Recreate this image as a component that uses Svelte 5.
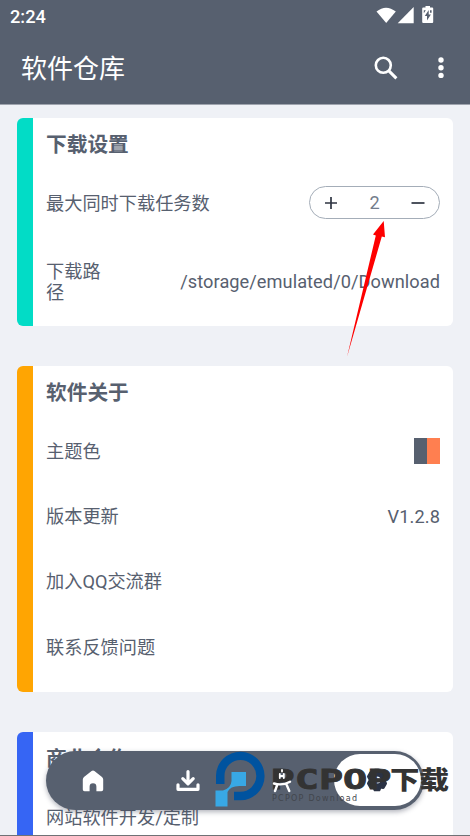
<script lang="ts">
  let maxTasks = $state(2);

  const downloadPath = '/storage/emulated/0/Download';
  const aboutRows = [
    { label: '主题色', kind: 'swatch', value: '' },
    { label: '版本更新', kind: 'text', value: 'V1.2.8' },
    { label: '加入QQ交流群', kind: 'text', value: '' },
    { label: '联系反馈问题', kind: 'text', value: '' }
  ];
</script>

<div class="screen">
  <header>
    <div class="status">
      <span>2:24</span>
      <svg width="60" height="20" viewBox="0 0 60 20" fill="#fff" aria-hidden="true">
        <path d="M1.5 5.6Q11 -2.2 20.8 5.6L11.2 17Z" />
        <path d="M38.7 1V17.3H22.7Z" />
        <path
          fill-rule="evenodd"
          d="M50.5 0h4.5v1.5h2.2q1 0 1 1v13.6q0 1-1 1h-9q-1 0-1-1V2.5q0-1 1-1h2.3zM53.7 4l-3.9 6h2.2v4.5l3.9-6h-2.2zM48.8 4.2v3l2-3zM56.6 4.2h-1.6v2.6h1.6z"
        />
      </svg>
    </div>
    <div class="toolbar">
      <h1>软件仓库</h1>
      <button type="button" aria-label="搜索">
        <svg width="24" height="24" viewBox="0 0 24 24" fill="none" stroke="#fff">
          <circle cx="9.3" cy="9.3" r="7.5" stroke-width="2.6" />
          <path d="M14.6 14.6l7.8 7.8" stroke-width="3" />
        </svg>
      </button>
      <button type="button" aria-label="更多">
        <svg width="6" height="22" viewBox="0 0 6 22" fill="#fff">
          <circle cx="3" cy="3" r="2.7" />
          <circle cx="3" cy="10.7" r="2.7" />
          <circle cx="3" cy="18.4" r="2.7" />
        </svg>
      </button>
    </div>
  </header>

  <main>
    <section class="card teal">
      <h2>下载设置</h2>
      <div class="row">
        <span class="label">最大同时下载任务数</span>
        <div class="stepper">
          <button type="button" aria-label="增加" onclick={() => maxTasks++}>
            <svg width="12" height="12" viewBox="0 0 12 12"><path d="M0 6h12M6 0v12" /></svg>
          </button>
          <span>{maxTasks}</span>
          <button type="button" aria-label="减少" onclick={() => maxTasks--}>
            <svg width="14" height="12" viewBox="0 0 14 12"><path d="M0.5 6h13" /></svg>
          </button>
        </div>
      </div>
      <div class="row path-row">
        <span class="narrow">下载路径</span>
        <span class="path">{downloadPath}</span>
      </div>
    </section>

    <section class="card orange">
      <h2>软件关于</h2>
      {#each aboutRows as row}
        <div class="row">
          <span class="label">{row.label}</span>
          {#if row.kind === 'swatch'}
            <span class="swatch"></span>
          {:else if row.value}
            <span class="version">{row.value}</span>
          {/if}
        </div>
      {/each}
    </section>

    <section class="card blue">
      <h2>商业合作</h2>
      <div class="row">
        <span class="label">网站软件开发/定制</span>
      </div>
    </section>
  </main>

  <nav>
    <button type="button" aria-label="首页">
      <svg width="22" height="22" viewBox="0 0 22 22" fill="#fff">
        <path d="M9.6 1q1.4-1.1 2.8 0l7.6 5.9q1.2 1 1.2 2.5v10.1q0 1.8-1.8 1.8h-5v-4.6a3.4 3.4 0 0 0-6.8 0v4.600h-5Q.8 21.300.8 19.500V9.400Q.8 7.900 2 6.900z" />
      </svg>
    </button>
    <button type="button" aria-label="下载">
      <svg width="24" height="22" viewBox="0 0 24 22" fill="none" stroke="#fff" stroke-width="3.2" stroke-linecap="round" stroke-linejoin="round">
        <path d="M12 1.6v12M6.800 8.600l5.200 5.200 5.200-5.200M2 14.800v4.500h20v-4.500" />
      </svg>
    </button>
    <button type="button" class="raised" aria-label="应用">
      <svg width="22" height="24" viewBox="0 0 22 24" fill="none" stroke="#fff" stroke-linecap="round">
        <path stroke-width="1.8" d="M11 .9v1.600M8.800 5v4M12.800 5v4M8.800 7h4" />
        <path stroke-width="2.4" d="M3 14.500q8.500 2.500 16-1.800M6 16.500L4 22M15.500 15.500l2.800 6.500" />
      </svg>
    </button>
    <button type="button" class="active" aria-label="设置">
      <svg width="24" height="24" viewBox="0 0 24 24">
        <path
          fill="#2b3345"
          stroke="#2b3345"
          stroke-width="3"
          stroke-linejoin="round"
          d="M10 2.200h4l1.200 2.800 3-.4 2.300 3.900L18.700 12l1.800 3.500-2.300 3.900-3-.4-1.200 2.800h-4l-1.200-2.800-3 .4-2.300-3.900L5.300 12 3.500 8.500l2.300-3.900 3 .4z"
        />
        <circle cx="12" cy="12" r="3.6" fill="#fff" />
      </svg>
    </button>
  </nav>

  <svg class="arrow" width="44" height="142" viewBox="0 0 44 142" aria-hidden="true">
    <path fill="#fe0000" d="M37.700 3L39 19.300 35.800 18.500 1 139 29.800 17.500 27 16.500z" />
  </svg>

  <svg class="watermark" width="240" height="62" viewBox="0 0 240 62" aria-hidden="true">
    <path fill="#00539f" d="M1 34V25.500a24.300 24.300 0 1 1 24.300 24.800H19V41.800h6.300a15.900 15.900 0 1 0-15.800-16.100V34z" />
    <path fill="#38a8e5" d="M16.500 22H31V36H24.500Q15 36 12.500 42V56.500H.5V40.500H8Q16 38 16.500 31z" />
    <text class="brand" x="55.500" y="39" textLength="121" lengthAdjust="spacingAndGlyphs">PCPOP</text>
    <text class="brand-cjk" x="175" y="39.300" textLength="59" lengthAdjust="spacingAndGlyphs">下载</text>
    <text class="tagline" x="57" y="50.500" textLength="85">PCPOP Download</text>
  </svg>
</div>

<style>
  :global(body) {
    margin: 0;
  }

  .screen {
    position: relative;
    box-sizing: border-box;
    height: 836px;
    overflow: hidden;
    border-bottom: 1px solid #6f7175;
    background: #eff1f6;
    color: #57606f;
    font-family: Roboto, 'Noto Sans CJK SC', sans-serif;
    font-size: 18.2px;
  }

  button {
    display: grid;
    place-items: center;
    padding: 0;
    border: 0;
    background: none;
    cursor: pointer;
  }

  svg {
    display: block;
  }

  header {
    box-sizing: border-box;
    height: 105px;
    border-bottom: 1px solid #9fa4ae;
    background: #57606f;
    color: #fff;
  }

  .status {
    display: flex;
    align-items: center;
    justify-content: space-between;
    height: 32px;
    padding: 0 35px 0 10px;
    font-size: 18.2px;
    font-weight: 500;
  }

  .status svg {
    margin-top: -1px;
  }

  .toolbar {
    display: flex;
    align-items: center;
    height: 72px;
    padding: 0 20px 0 21px;
  }

  h1 {
    flex: 1;
    margin: 0;
    padding-top: 2px;
    font-size: 26px;
    font-weight: 400;
    line-height: 36px;
  }

  .toolbar button {
    width: 28px;
    height: 40px;
  }

  .toolbar button + button {
    width: 26px;
    margin-right: -4px;
    margin-left: 28px;
  }

  main {
    display: flex;
    flex-direction: column;
    gap: 40px;
    padding: 13px 17px 0;
  }

  .card {
    box-sizing: border-box;
    padding: 0 13px 12px;
    border-left: 16px solid;
    border-radius: 6px;
    background: #fff;
  }

  .teal {
    height: 208px;
    border-color: #02dcc6;
  }

  .orange {
    height: 326px;
    border-color: #ffa502;
  }

  .blue {
    height: 208px;
    border-color: #3665f4;
  }

  h2 {
    height: 52px;
    margin: 0;
    font-size: 20.7px;
    font-weight: 700;
    line-height: 54px;
  }

  .row {
    display: flex;
    align-items: center;
    justify-content: space-between;
    height: 65.3px;
  }

  .label {
    padding-bottom: 2px;
  }

  .path-row {
    height: 92px;
  }

  .narrow {
    width: 58px;
    padding-top: 1px;
    line-height: 21px;
  }

  .path {
    letter-spacing: 0.06px;
  }

  .version {
    padding-top: 1px;
    letter-spacing: 0.1px;
  }

  .stepper {
    display: flex;
    align-items: center;
    justify-content: space-between;
    box-sizing: border-box;
    width: 131px;
    height: 33px;
    border: 1px solid #a4adb8;
    border-radius: 17px;
    color: #747d8c;
  }

  .stepper button {
    width: 42px;
    height: 30px;
  }

  .stepper path {
    stroke: #2f3542;
    stroke-width: 1.7;
  }

  .swatch {
    width: 26px;
    height: 26px;
    background: linear-gradient(90deg, #57606f 50%, #ff7f50 50%);
  }

  nav {
    position: absolute;
    top: 751px;
    left: 46px;
    display: grid;
    grid-template-columns: repeat(4, 1fr);
    box-sizing: border-box;
    width: 378px;
    height: 59px;
    border-radius: 30px;
    background: #57606f;
    box-shadow: 0 2px 5px rgba(60, 66, 85, 0.4);
  }

  nav .raised {
    z-index: 1;
  }

  nav .active {
    margin: 3px 3px 4px 4px;
    border-radius: 27px;
    background: #fff;
  }

  .arrow {
    position: absolute;
    top: 218px;
    left: 346px;
  }

  .watermark {
    position: absolute;
    top: 750px;
    left: 215px;
  }

  .brand,
  .brand-cjk {
    fill: #333;
  }

  .brand {
    font: 700 26px 'DejaVu Sans Mono', monospace;
    stroke: #333;
    stroke-width: 0.8px;
  }

  .brand-cjk {
    font: 900 25px 'Noto Sans CJK SC', sans-serif;
  }

  .tagline {
    fill: #42464d;
    font: 8px 'DejaVu Sans', sans-serif;
  }
</style>
